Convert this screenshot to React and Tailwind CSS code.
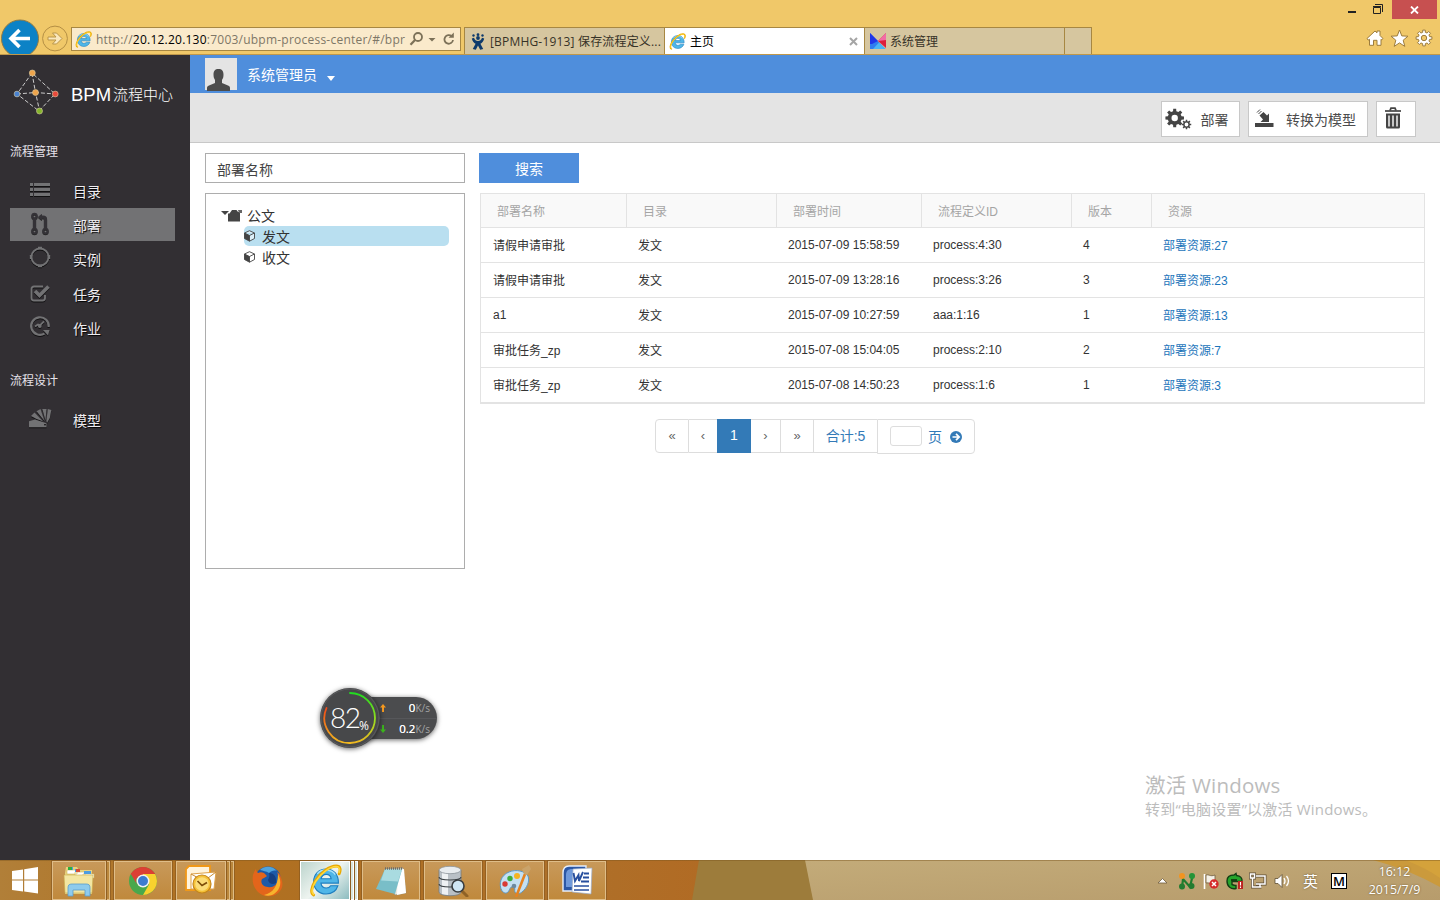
import React from "react";

const ui = "font-['Open_Sans','Noto_Sans_CJK_SC',sans-serif]";

function gearPath(cx, cy, outer, inner, teeth, hole) {
  const pts = [];
  const step = (Math.PI * 2) / teeth;
  for (let i = 0; i < teeth; i++) {
    const a = i * step - Math.PI / 2;
    [[-0.3, inner], [-0.2, outer], [0.2, outer], [0.3, inner]].forEach(([k, r]) => {
      pts.push(`${(cx + Math.cos(a + k * step) * r).toFixed(2)} ${(cy + Math.sin(a + k * step) * r).toFixed(2)}`);
    });
  }
  return `M${pts.join("L")}ZM${cx - hole} ${cy}a${hole} ${hole} 0 1 0 ${hole * 2} 0a${hole} ${hole} 0 1 0 ${-hole * 2} 0Z`;
}

function IeLogo({ className }) {
  return (
    <svg viewBox="0 0 32 32" className={className}>
      <path d="M28.5 18.5H11.6c.4 3 2.400 4.800 5.200 4.800 2 0 3.400-.8 4.200-2.200h7c-1.600 5-5.800 8-11.400 8C9.400 29.100 4.500 24 4.500 17S9.500 4.800 16.600 4.800 28.700 10 28.500 18.500ZM11.700 14.300h9.800c-.4-2.700-2.200-4.200-4.800-4.200s-4.400 1.500-5 4.200Z" fill="#4fb6e8" stroke="#1f7fc0" strokeWidth="1.100" />
      <path d="M8 9.500C10 7 13 5.600 17 5.800c4 .2 7 2 8.500 4.500" fill="none" stroke="#a8e2fa" strokeWidth="1.300" />
      <path d="M4.500 30C1.500 28.500 2 23 6 16.500 11 8.500 20 2 26.500 2c4 0 4.500 3.400 2.800 7.500" fill="none" stroke="#e9a800" strokeWidth="2.800" strokeLinecap="round" />
      <path d="M4.500 29.500C2 28 2.500 23 6.400 17 11.500 8.800 20.500 2.400 26.300 2.400c3.400 0 4 2.600 2.900 5.800" fill="none" stroke="#ffd83c" strokeWidth="1.500" strokeLinecap="round" />
    </svg>
  );
}

function WindowChrome() {
  return (
    <header className={`flex h-[55px] shrink-0 items-end overflow-hidden border-b border-[#c0984a] bg-[#f0c869] ${ui}`}>
      <svg width="71" height="36" viewBox="0 19 71 36" className="shrink-0">
        <circle cx="20" cy="39.500" r="18.500" fill="#0c82c6" stroke="#8f7a45" />
        <path d="M30 39.500H12M19.500 31 11 39.500l8.500 8.500" fill="none" stroke="#fff" strokeWidth="3.600" />
        <circle cx="55" cy="39.500" r="12.400" fill="none" stroke="#b48f44" />
        <path d="M48 38h8l-3.500-4h4l5.500 5.500-5.500 5.500h-4l3.500-4h-8Z" fill="#fae8bd" stroke="#b9964b" />
      </svg>
      <div className="mb-[3px] flex h-6 w-[390px] shrink-0 items-center border border-[#a78742] bg-[#faeacb]">
        <IeLogo className="ml-[3px] h-[17px] w-[17px] shrink-0" />
        <div className="ml-1 w-[313px] overflow-hidden whitespace-nowrap pt-px text-[12px] leading-5 tracking-[0.23px] text-[#7e7767]">
          http://<span className="text-black">20.12.20.130</span>:7003/ubpm-process-center/#/bpr
        </div>
        <svg width="48" height="18" viewBox="0 0 48 18" fill="none" stroke="#7c7158" strokeWidth="1.800" className="shrink-0">
          <circle cx="9" cy="7" r="4" />
          <path d="m6 10-4.500 4.800" strokeWidth="2.200" />
          <path d="M19.500 8h7L23 11.500Z" fill="#7c7158" stroke="none" />
          <path d="M42.700 6.300A4.300 4.300 0 1 0 44 10" />
          <path d="M44.800 2.500v5.300h-5.300Z" fill="#7c7158" stroke="none" />
        </svg>
      </div>
      <div className="ml-[3px] flex h-[27px] shrink-0 text-[12px] leading-[27px]">
        <div className="flex w-[200px] items-center border-l border-t border-[#a78742] bg-[#d6c69f] text-[#363227]">
          <svg width="14" height="17" viewBox="0 0 14 17" className="ml-[6px] shrink-0" fill="#0d3a6b">
            <circle cx="2.500" cy="2.500" r="1.200" /><circle cx="7" cy="1.700" r="1.400" /><circle cx="11.500" cy="2.500" r="1.200" />
            <circle cx="7" cy="5" r="1.900" />
            <path d="M.8 5.500 3 4.800C3.800 7.300 5 8 7 8s3.200-.7 4-3.200l2.200.7c-.5 2.700-2 4.400-3.800 5.200l2.800 5.400-3 .6L7 12.400 4.800 16.700l-3-.6 2.800-5.400C2.800 9.900 1.300 8.200.8 5.500Z" />
          </svg>
          <span className="ml-[5px] whitespace-nowrap tracking-[0.18px]">[BPMHG-1913] 保存流程定义...</span>
        </div>
        <div className="flex w-[201px] items-center border-x border-t border-[#a78742] bg-white text-black">
          <IeLogo className="ml-1 h-[17px] w-[17px] shrink-0" />
          <span className="ml-1">主页</span>
          <svg width="9" height="9" viewBox="0 0 9 9" className="ml-auto mr-[6px]"><path d="m1 1 7 7M8 1 1 8" stroke="#a5a5a5" strokeWidth="2" /></svg>
        </div>
        <div className="flex w-[200px] items-center border-r border-t border-[#a78742] bg-[#d6c69f] text-[#363227]">
          <svg width="16" height="16" viewBox="0 0 16 16" className="ml-[5px] shrink-0">
            <path d="M0 0 15.500 16H0Z" fill="#2f7df0" /><path d="M0 0 8 8 2 11H0Z" fill="#2036e8" /><path d="M3 16h12.500L9 9.500Z" fill="#4bb4f5" />
            <path d="M16 0v15L8 8Z" fill="#dc1f3c" /><path d="M16 0v7L8 8Z" fill="#f26ba5" />
          </svg>
          <span className="ml-1">系统管理</span>
        </div>
        <div className="w-[27px] border-r border-t border-[#a78742] bg-[#d6c69f]" />
      </div>
      <div className="ml-auto flex h-full flex-col items-end">
        <div className="mr-[3px] flex h-[19px]">
          <svg width="36" height="19" viewBox="0 0 36 19" fill="none" stroke="#222">
            <path d="M0 12h8" strokeWidth="2" />
            <path d="M25.500 7.500h7v6h-7ZM25 6.500h8M27 4.500h7.500V12" />
          </svg>
          <div className="ml-2 flex w-[45px] items-center justify-center bg-[#c75050]">
            <svg width="9" height="8" viewBox="0 0 9 8"><path d="m1 .5 7 7M8 .5l-7 7" stroke="#fff" strokeWidth="1.800" /></svg>
          </div>
        </div>
        <svg width="74" height="18" viewBox="1366 29 74 18" className="mt-[10px]" fill="#fff" stroke="#9c7c3d" strokeWidth="1">
          <path d="m1367 38.500 8-7.500 2 1.800V31h3v4.500l3 3-1.300 1.300-.7-.5v6h-4v-5h-3.500v5h-4v-6l-1.300.8Z" />
          <path d="m1399.500 30 2.300 5.900 6.200.3-4.800 4 1.600 6.200-5.300-3.500-5.300 3.500 1.600-6.200-4.800-4 6.200-.3Z" />
          <path fillRule="evenodd" d={gearPath(1424, 38, 8, 5.800, 8, 2.700)} />
        </svg>
      </div>
    </header>
  );
}

const navIcons = {
  list: (
    <g fill="#727274">
      <path d="M0 4h3v3H0ZM0 9h3v3H0ZM0 14h3v3H0ZM4 4h16v3H4ZM4 9h16v3H4ZM4 14h16v3H4Z" />
    </g>
  ),
  branch: (
    <g fill="none" stroke="#343237" strokeWidth="2">
      <circle cx="4.500" cy="3" r="2.200" /><circle cx="4.500" cy="18" r="2.200" /><circle cx="15.500" cy="18" r="2.200" />
      <path d="M4.500 5.500v10" strokeWidth="3.200" /><path d="M15.500 15.500V6c0-1.700-.8-2-2.500-2h-2" strokeWidth="3.200" />
      <path d="M8.500 4 11.500 1.500v5Z" fill="#343237" strokeWidth="1" />
    </g>
  ),
  ring: (
    <g fill="none" stroke="#727274" strokeWidth="1.800">
      <circle cx="10" cy="10" r="8.500" />
      <path d="M8 1h4M8 19h4M1 8v4M19 8v4" strokeWidth="2.400" />
    </g>
  ),
  check: (
    <g fill="none" stroke="#727274">
      <path d="M13 4.500H4A2.500 2.500 0 0 0 1.500 7v9A2.500 2.500 0 0 0 4 18.500h8.500A2.500 2.500 0 0 0 15 16v-3" strokeWidth="1.900" />
      <path d="m5 9 4.500 4.500 9-9" strokeWidth="3.600" />
    </g>
  ),
  job: (
    <g fill="none" stroke="#727274">
      <path d="M18.700 11a8.800 8.800 0 1 0-4.200 6.600" strokeWidth="2.200" />
      <path d="M13 14h6.500L18 19.500Z" fill="#727274" stroke="none" />
      <path d="m5 10.500 3-2 2 .8 4-4" strokeWidth="1.800" /><circle cx="9.800" cy="10" r="1.900" fill="#727274" stroke="none" />
    </g>
  ),
  swatch: (
    <g fill="#727274">
      <path fillRule="evenodd" d="M-1 13.200 5 11.500l11.500 3.700v4H-1ZM14.200 16v1.600h1.600V16Z" />
      <path d="M1 8 4.500 4.500 13 13.200 6.500 11Z" />
      <path d="m6.500 3.200 4-2.200 4 12Z" />
      <path d="M12.300 1h4.200l-1 11.500Z" />
      <path d="m17.800 1 3.500 1-1.500 8-2.800 5-.7-2Z" />
    </g>
  ),
};

function NavItem({ icon, label, h = "h-[34px]", active }) {
  return (
    <li className={h}>
      <div className={`flex h-[33px] w-[165px] ${active ? "bg-[#727274]" : ""}`}>
        <svg width="22" height="21" viewBox="0 0 22 21" className="ml-5 mt-[5px] overflow-visible drop-shadow-[0_1px_0_rgba(0,0,0,0.65)]">{navIcons[icon]}</svg>
        <span className="ml-[21px] mt-[1px] text-[14px] leading-[34px] text-[#eeecf0] [text-shadow:1px_1px_1px_#000]">{label}</span>
      </div>
    </li>
  );
}

function Sidebar() {
  return (
    <aside className="flex w-[190px] shrink-0 flex-col bg-[#322f33] pl-[10px]">
      <div className="flex h-[87px] text-white">
        <svg width="52" height="50" viewBox="10 67 52 50" className="mt-3 shrink-0">
          <path d="m32 73-15 21 22 17 16-17Zm0 0 3.500 19.500 4 18M17 94l18.500-1.500L55 94" fill="none" stroke="#ddd" strokeWidth=".9" strokeDasharray="4 2" />
          <g stroke="#d9c9a0" strokeWidth=".6">
            <circle cx="32.300" cy="73" r="3" fill="#eea44c" /><circle cx="17" cy="94" r="2.900" fill="#4a82d0" /><circle cx="35.500" cy="92.500" r="3" fill="#eea44c" />
            <circle cx="55.300" cy="94" r="2.900" fill="#e8493c" /><circle cx="39.500" cy="111" r="3" fill="#84b52c" />
          </g>
        </svg>
        <div className="ml-[9px] mt-7 flex whitespace-nowrap leading-6">
          <span className="w-[42px] font-['Liberation_Sans',sans-serif] text-[18.5px]">BPM</span>
          <span className="text-[15px] font-light">流程中心</span>
        </div>
      </div>
      <h2 className="h-8 text-[12px] leading-5 text-[#e6e2ea]">流程管理</h2>
      <ul>
        <NavItem icon="list" label="目录" />
        <NavItem icon="branch" label="部署" active />
        <NavItem icon="ring" label="实例" h="h-[35px]" />
        <NavItem icon="check" label="任务" />
        <NavItem icon="job" label="作业" />
      </ul>
      <h2 className="mt-[26px] h-8 text-[12px] leading-5 text-[#e6e2ea]">流程设计</h2>
      <ul><NavItem icon="swatch" label="模型" /></ul>
    </aside>
  );
}

function UserBar() {
  return (
    <div className="flex h-[38px] shrink-0 bg-[#4f8edc] pl-[15px] text-white">
      <svg width="32" height="33" viewBox="0 0 32 33" className="mt-[3px] shrink-0">
        <path d="M0 0h32v32H0Z" fill="#e4e4e4" />
        <path d="M13.500 11c3.500 0 5 2 5 5.500 0 2.500-.5 4-1.500 5.500v3l6 2.500c1.500.6 2 1.500 2 2.500v3H2v-3c0-1 .6-1.900 2-2.500l6-2.500v-3c-1-1.500-1.500-3-1.500-5.500 0-3.500 1.500-5.500 5-5.500Z" fill="#4c4c4c" />
      </svg>
      <span className="ml-[10px] text-[14px] leading-[41px]">系统管理员</span>
      <svg width="8" height="5" viewBox="0 0 8 5" className="ml-[10px] mt-[21px]"><path d="M0 0h8L4 5Z" fill="#fff" /></svg>
    </div>
  );
}

function Toolbar() {
  const btn = "flex h-9 border border-[#c8c8c8] bg-white text-[14px] leading-[36px] text-[#4c4c4c]";
  return (
    <div className="flex h-[50px] shrink-0 justify-end gap-2 border-b border-[#c8c8c8] bg-[#e4e4e4] pr-6 pt-2">
      <button className={`${btn} w-[79px]`}>
        <svg width="27" height="22" viewBox="0 0 27 22" className="ml-[3px] mt-[6px]" fill="#444" fillRule="evenodd">
          <path d={gearPath(9.700, 10, 9.400, 7, 8, 3.200)} /><path d={gearPath(21.500, 16.500, 4.800, 3.400, 8, 1.900)} />
        </svg>
        <span className="ml-[8.500px]">部署</span>
      </button>
      <button className={`${btn} w-[120px]`}>
        <svg width="19" height="18" viewBox="0 0 19 18" className="ml-[6px] mt-[7px]" fill="#444">
          <path d="M0 14h18.500v4H0Z" /><path d="m4.500 6.500 4-3.500 3.500 3.500L14 4.500V13H5.500l2.500-2.500Z" />
          <path d="m2 3.500 3-3M3.500 5l3-3" stroke="#444" strokeWidth="1" />
        </svg>
        <span className="ml-3">转换为模型</span>
      </button>
      <button className={`${btn} w-10`}>
        <svg width="16" height="22" viewBox="0 0 16 22" className="ml-2 mt-[5px]" fill="none" stroke="#444">
          <path d="M0 4h16" strokeWidth="1.700" /><path d="M5 3.500 6 1.200h4l1 2.300" strokeWidth="1.800" />
          <path d="M1 6.500h14V20a1.500 1.500 0 0 1-1.500 1.500h-11A1.500 1.500 0 0 1 1 20Z" fill="#444" stroke="none" />
          <path d="M4 8.500v11M8 8.500v11M12 8.500v11" stroke="#ddd" strokeWidth="1.700" />
        </svg>
      </button>
    </div>
  );
}

function Cube() {
  return (
    <svg width="11" height="12" viewBox="0 0 11 12" className="shrink-0">
      <path d="M5.500.700 10.500 3v5.500l-5 2.700-5-2.700V3ZM.5 3l5 2.500 5-2.500M5.500 5.500v5.700" fill="#fff" fillOpacity=".5" stroke="#444" strokeWidth=".9" />
      <path d="m.5 3 5 2.500v5.700l-5-2.700Z" fill="#444" />
    </svg>
  );
}

function Tree() {
  return (
    <div className="mt-[10px] h-[376px] border border-[#adadad] pl-[15px] pt-3 text-[14px] leading-[21px] text-[#333]">
      <div className="flex h-5 items-center">
        <svg width="21" height="13" viewBox="0 0 21 13" className="-mt-px">
          <path d="M0 2h8L4 6ZM7 4.500h1.500L11 1h4.500L17 3h2v9.500H7Z" fill="#444" /><path d="M17 1h4v3h-3Z" fill="#666" />
        </svg>
        <span className="ml-[5px]">公文</span>
      </div>
      <ul className="ml-[23px] w-[205px]">
        <li className="flex h-5 items-center gap-[7px] rounded-[5px] bg-[#b9dff0]"><Cube /><span className="mt-0.5">发文</span></li>
        <li className="mt-px flex h-5 items-center gap-[7px]"><Cube /><span className="mt-0.5">收文</span></li>
      </ul>
    </div>
  );
}

const rows = [
  ["请假申请审批", "发文", "2015-07-09 15:58:59", "process:4:30", "4", "部署资源:27"],
  ["请假申请审批", "发文", "2015-07-09 13:28:16", "process:3:26", "3", "部署资源:23"],
  ["a1", "发文", "2015-07-09 10:27:59", "aaa:1:16", "1", "部署资源:13"],
  ["审批任务_zp", "发文", "2015-07-08 15:04:05", "process:2:10", "2", "部署资源:7"],
  ["审批任务_zp", "发文", "2015-07-08 14:50:23", "process:1:6", "1", "部署资源:3"],
];

function DeployTable() {
  const heads = ["部署名称", "目录", "部署时间", "流程定义ID", "版本", "资源"];
  return (
    <div className="ml-px mt-[10px] w-[945px] border border-b-2 border-[#e3e3e3] text-[12px] text-[#333]">
      <div className="grid h-[33px] grid-cols-[146px_150px_145px_150px_80px_1fr] bg-[#f9f9f9] leading-[36px] text-[#a5a5a5]">
        {heads.map((h, i) => (
          <div key={h} className={`h-[33px] pl-4 ${i < 5 ? "border-r border-[#e3e3e3]" : ""}`}>{h}</div>
        ))}
      </div>
      {rows.map((r, i) => (
        <div key={i} className="grid h-[35px] grid-cols-[145px_150px_145px_150px_80px_1fr] border-t border-[#e3e3e3]">
          {r.map((c, j) => (
            <div key={j} className={`pl-3 ${/[\u4e00-\u9fff]/.test(c) ? "leading-[36px]" : "leading-[34px]"} ${j === 5 ? "text-[#1c75bb]" : ""}`}>{c}</div>
          ))}
        </div>
      ))}
    </div>
  );
}

function Pager() {
  const cell = "h-[34px] border-y border-r border-[#ddd] text-center";
  const arrow = `${cell} text-[13px] leading-[32px] text-[#666]`;
  return (
    <div className="ml-[176px] mt-[15px] flex text-[14px] text-[#337ab7]">
      <div className={`${arrow} w-[34px] rounded-l border-l`}>«</div>
      <div className={`${arrow} w-7 border-r-0`}>‹</div>
      <div className="h-[34px] w-[34px] bg-[#337ab7] text-center leading-[33px] text-white">1</div>
      <div className={`${arrow} w-[30px]`}>›</div>
      <div className={`${arrow} w-[33px]`}>»</div>
      <div className={`${cell} w-[63px] border-r-0 leading-[33px]`}>合计:5</div>
      <div className="flex h-[35px] w-[98px] items-center rounded-r border border-[#ddd]">
        <div className="mb-px ml-3 h-5 w-8 rounded-[3px] border border-[#ddd]" />
        <span className="ml-[6px] leading-8">页</span>
        <svg width="12" height="12" viewBox="0 0 12 12" className="ml-2"><circle cx="6" cy="6" r="6" fill="#337ab7" /><path d="M2.500 6h6M6 2.800 9.200 6 6 9.200" fill="none" stroke="#fff" strokeWidth="1.700" /></svg>
      </div>
    </div>
  );
}

function SpeedWidget() {
  return (
    <div className={`absolute left-[320px] top-[688px] flex h-[60px] w-[118px] items-center ${ui}`}>
      <div className="absolute left-[30px] top-[9px] flex h-[42px] w-[87px] flex-col rounded-r-full bg-[#4b4c4e] shadow-[0_1px_5px_rgba(0,0,0,0.6)]">
        {[["#f79a20", "M4 0 7 3.500H5V8H3V3.500H1Z", "0"], ["#3cb41e", "M4 8 1 4.500h2V0h2v4.500h2Z", "0.2"]].map(([c, d, v], i) => (
          <div key={v} className={`flex h-[21px] items-center pr-[7px] ${i ? "border-t border-[#56575a]" : "pt-px"}`}>
            <svg width="8" height="8" viewBox="0 0 8 8" className="ml-[29px]"><path d={d} fill={c} /></svg>
            <span className="ml-auto text-[11.5px] text-white [text-shadow:0_0_0.5px_#fff]">{v}</span>
            <span className="text-[10px] text-[#a4a4a4]">K/s</span>
          </div>
        ))}
      </div>
      <div className="relative h-[60px] w-[60px] rounded-full bg-[#47484a] shadow-[0_1px_5px_rgba(0,0,0,0.6)]">
        <svg width="60" height="60" viewBox="0 0 60 60" fill="none" strokeWidth="1.800" strokeLinecap="round">
          <defs>
            <linearGradient id="ringRight" x1="0" y1="0" x2="0" y2="1"><stop stopColor="#20dc20" /><stop offset=".55" stopColor="#9cdc20" /><stop offset="1" stopColor="#f0b820" /></linearGradient>
            <linearGradient id="ringLeft" x1="0" y1="0" x2="0" y2="1"><stop stopColor="#f04a18" /><stop offset="1" stopColor="#f0b820" /></linearGradient>
          </defs>
          <circle cx="30" cy="30" r="29" stroke="#5a5b5d" strokeWidth="1" />
          <path d="M30 5a25 25 0 0 1 0 50" stroke="url(#ringRight)" /><path d="M30 55A25 25 0 0 1 6.500 20" stroke="url(#ringLeft)" />
        </svg>
        <span className="absolute left-[10px] top-[13px] font-['Lato',sans-serif] text-[28px] font-light leading-8 tracking-[-1.6px] text-white">82</span>
        <span className="absolute left-[39px] top-[30px] text-[12px] leading-4 text-white">%</span>
      </div>
    </div>
  );
}

const appIcons = {
  folder: (
    <g>
      <path d="M2 8 3 2h11l2 3h13v24H2Z" fill="#e7d37f" /><path d="M4 5h10v4H4ZM12 7h10v4H12ZM20 9h11v4H20Z" fill="#fff" stroke="#d0b85c" strokeWidth=".6" />
      <path d="M5 2h5v3H5ZM12 4h5v3h-5ZM21 6h7v3h-7Z" fill="#4c9de0" /><path d="M5 2h4v3H5Z" fill="#2fae3c" /><path d="M13 4h4v3h-4Z" fill="#d84c34" />
      <path d="M1 10h29l-1 18H2Z" fill="#f3e6a2" stroke="#c9ad4c" strokeWidth=".6" />
      <path d="M5 31V23c0-3 1-4 4-4h14c3 0 4 1 4 4v8h-5v-6H10v6Z" fill="#8ecbed" stroke="#5a9cc9" strokeWidth=".8" />
    </g>
  ),
  chrome: (
    <g>
      <circle cx="16" cy="16" r="14" fill="#49a84c" /><path d="M16 16 3.900 9a14 14 0 0 1 24.200 0Z" fill="#d93b31" /><path d="M16 16V9h12.100A14 14 0 0 1 16 30l6-10.500Z" fill="#f8d22e" />
      <path d="M16 9h12A14 14 0 0 0 3.900 9L10 19.500A7 7 0 0 1 16 9Z" fill="#dc4034" />
      <circle cx="16" cy="16" r="6.500" fill="#f2f2f2" /><circle cx="16" cy="16" r="5" fill="#3c7bd0" />
    </g>
  ),
  outlook: (
    <g>
      <path d="M4 1h21v24H1V4Z" fill="#fff3dc" stroke="#f09818" strokeWidth="1.800" /><path d="M6 9l25-2-2 17H6Z" fill="#fff" stroke="#dda14a" />
      <path d="m6 9 13 7L31 7" fill="none" stroke="#c98a2c" /><circle cx="17" cy="19" r="9" fill="#f5c138" stroke="#c5861a" strokeWidth="1.200" />
      <circle cx="17" cy="19" r="6.800" fill="#fbdc78" /><path d="m12.500 16 4.500 4.500 5-3" fill="none" stroke="#7c4c08" strokeWidth="1.700" />
    </g>
  ),
  firefox: (
    <g>
      <circle cx="17" cy="14.500" r="13" fill="#1d5aa8" />
      <path d="M9 5c5-5 13-4 17 1-3-1-6 0-8 2-3-2-6-2-9-3Z" fill="#4fa3dc" />
      <path d="M18 8c5 0 8 4 7 10-3 2-7 1-8-3 1-2 2-4 1-7Z" fill="#163f82" />
      <path d="M2 10c1-3 2-5 3-6 0 2 1 3 2 4 2-1 4-1 6 0l3 3c-1 1-3 2-5 3-2 4 1 8 6 8 5 1 9-2 10-7 1-3 0-6-1-8 3 2 4 4 4 6 3 7 1 12-3 15-6 5-15 4-20-1-5-5-6-11-5-17Z" fill="#e3651b" />
      <path d="M27 9c4 8 3 15-4 20-3 2-7 2-10 1 9-2 14-9 14-21Z" fill="#f7b32c" />
    </g>
  ),
  note: (
    <g>
      <path d="m10 4 18-1 3 25-11 2Z" fill="#e9e9df" stroke="#8d8d83" strokeWidth=".6" /><path d="m23 5 6-1 2 24-9 2Z" fill="#fff" /><path d="m10 4 17 .5-7 24.500-19-5Z" fill="#79bec8" />
      <path d="m10 4 17 .5-4 12-17-1Z" fill="#a9dbe0" /><path d="M10 3.500h18" stroke="#6d6d68" strokeWidth="2.500" strokeDasharray="1 1" />
    </g>
  ),
  db: (
    <g>
      <path d="M2 5v22c0 5 22 5 22 0V5Z" fill="#b9c0c6" stroke="#747b80" strokeWidth=".8" /><path d="M5 7v22l6 1V8Z" fill="#eef1f3" /><path d="M2 12c0 4 22 4 22 0M2 19c0 4 22 4 22 0" fill="none" stroke="#3c4246" strokeWidth="1.100" />
      <ellipse cx="13" cy="5" rx="11" ry="3.700" fill="#e8ecef" stroke="#8d949a" strokeWidth=".8" />
      <path d="m24 25 6 6" stroke="#8f6226" strokeWidth="3" strokeLinecap="round" /><circle cx="21" cy="21" r="6" fill="#cfe6f4" stroke="#393d40" strokeWidth="1.600" />
    </g>
  ),
  paint: (
    <g>
      <path d="M3 26C-1 19 2 10 10 7c7-3 16-1 19 4 2 5-1 12-6 16-2 2-6 2-7 0s1-4-2-5-3 3-5 5-4 1-6-1Z" fill="#c4e0f2" stroke="#5d97c2" strokeWidth="1" />
      <circle cx="6" cy="19" r="2.700" fill="#d93a34" /><circle cx="11" cy="13.500" r="2.700" fill="#3eac3c" /><circle cx="18" cy="11" r="3" fill="#f4b321" /><circle cx="15" cy="21" r="2.300" fill="#6d8aa0" />
      <path d="M17 32 26 9" stroke="#e58220" strokeWidth="2.600" /><path d="m25 9-2-5 7-4 2 4-4 6Z" fill="#caa36a" />
    </g>
  ),
  word: (
    <g>
      <path d="M8 1h17v25H2V8C2 4 4 1 8 1Z" fill="#2c57a5" stroke="#e6eefb" strokeWidth="1.400" /><path d="M5 10C5 6 7 4 11 4h5l-5 18H5Z" fill="#6e98da" />
      <path d="m12 4 19-1-1 26-19-2Z" fill="#fff" stroke="#9aabc9" strokeWidth=".7" />
      <path d="m12.500 8 1.500 8 3.500-6 .5 6 4-9M23 8.500h5M22 12.500h6M20 16.500h8" fill="none" stroke="#284f9e" strokeWidth="1.900" />
      <path d="M13 21h15M13 25h15" stroke="#284f9e" strokeWidth="1.700" />
    </g>
  ),
};

function TaskButton({ name, stack = 0, plain, active }) {
  const face = plain
    ? "border-transparent"
    : active
      ? "border-white bg-[linear-gradient(135deg,#bcd4cd,#eef4f0_50%,#8cbcc0)]"
      : "border-[#dfbd88] bg-[linear-gradient(#c8995a,#c0893c)]";
  const edge = active ? "border-white bg-[#d8e6e0]" : "border-[#dfbd86] bg-[#bb883d]";
  return (
    <div className={`mr-1 flex h-[39px] w-[58px] gap-px ${plain ? "" : "bg-[#825520]/70 outline outline-1 outline-[#825520]/60"}`}>
      <div className={`flex flex-1 items-center justify-center border ${face}`}>
        {name === "ie" ? <IeLogo className="h-[33px] w-[33px]" /> : <svg width="32" height="32" viewBox="0 0 32 32">{appIcons[name]}</svg>}
      </div>
      {Array.from({ length: stack }, (_, i) => <div key={i} className={`w-[3px] border-y border-r ${edge}`} />)}
    </div>
  );
}

function Tray() {
  return (
    <div className="ml-auto flex h-full items-center text-white">
      <svg width="194" height="24" viewBox="1156 869 194 24" className="mt-px">
        <path d="m1158 883 4.500-4.500 4.500 4.500Z" fill="#fff" stroke="#6e5c3c" strokeWidth=".8" />
        <path d="m1182 888 1-9 7 8 3-13" fill="none" stroke="#207c2e" strokeWidth="2.200" />
        <circle cx="1182" cy="876" r="3" fill="#f29420" /><circle cx="1192" cy="876" r="3" fill="#259438" /><circle cx="1182" cy="886.500" r="3" fill="#237c30" /><circle cx="1191.500" cy="886" r="3" fill="#237c30" />
        <path d="M1204.500 874v15" stroke="#fff" strokeWidth="1.600" /><path d="M1206 875c3-1 4 2 9 0v8c-4 2-6-1-9 0Z" fill="#f4f0e6" stroke="#6e5c3c" strokeWidth=".8" />
        <circle cx="1214" cy="884" r="4.700" fill="#d52b2b" /><path d="m1212 882 4 4m0-4-4 4" stroke="#fff" strokeWidth="1.500" />
        <path d="M1227 881c0-4 3-6 7-6l2-1.500.5 2c4 .5 6 2.500 5.500 6h-10v3c2 1 3 1 4 1v3c-5 1-9-2-9-7.500Z" fill="#25a52b" stroke="#143f14" strokeWidth="1.400" />
        <path d="M1231 880h6" stroke="#0f2d0f" strokeWidth="1.600" />
        <path d="M1238 881h5v8h-5Z" fill="#bc2320" /><path d="M1240.500 882v3.500M1240.500 886.500v1.500" stroke="#fff" strokeWidth="1.100" />
        <g fill="none" stroke="#5e4e34" strokeWidth="3"><path d="M1256 876h9v8h-9M1250.500 874h4v4h-4ZM1252.500 878v9h9" /></g>
        <g fill="none" stroke="#fff" strokeWidth="1.500"><path d="M1256 876h9v8h-9M1250.500 874h4v4h-4ZM1252.500 878v9h9M1260 884v3" /></g>
        <path d="M1275 878.500h3l4-4v13l-4-4h-3Z" fill="#fff" stroke="#5e4e34" strokeWidth=".8" /><path d="M1284 878q2 3 0 6M1286.500 876q4 5 0 10" fill="none" stroke="#fff" strokeWidth="1.300" />
      </svg>
      <span className="-ml-[47px] text-[15px] leading-5 [text-shadow:0_0_2px_#5e4e34]">英</span>
      <span className="ml-[13px] h-4 w-4 border border-black bg-white text-center text-[13px] font-semibold leading-[14px] text-black">M</span>
      <div className="ml-[18px] mr-4 w-[59px] whitespace-nowrap text-center text-[12.4px] leading-[18px] [text-shadow:0_0_2px_#6b532b]">
        <div>16:12</div><div>2015/7/9</div>
      </div>
    </div>
  );
}

function Taskbar() {
  return (
    <footer className={`relative h-10 shrink-0 overflow-hidden ${ui}`}>
      <svg width="1440" height="40" viewBox="0 0 1440 40" className="absolute inset-0">
        <defs>
          <linearGradient id="wallLeft"><stop stopColor="#b17f38" /><stop offset=".3" stopColor="#b07020" /><stop offset=".8" stopColor="#ae7029" /><stop offset="1" stopColor="#b16b24" /></linearGradient>
          <linearGradient id="wallRight" x2="1" y2="1"><stop stopColor="#c3ab79" /><stop offset="1" stopColor="#b79c6c" /></linearGradient>
        </defs>
        <path d="M0 0h700v40H0Z" fill="url(#wallLeft)" /><path d="M699 0h120v40H692Z" fill="#9d7c3b" />
        <path d="M805 0h635v40H813Z" fill="url(#wallRight)" />
        <path d="M1373 0h67v27q-30-17-67-27Z" fill="#cb9a3c" /><path d="M1405 0h35v18q-14-10-35-18Z" fill="#d4a23b" />
        <path d="M0 .5h1440" stroke="#7c5620" strokeOpacity=".45" />
      </svg>
      <div className="relative flex h-full pt-px">
        <svg width="52" height="39" viewBox="0 0 52 39" className="shrink-0"><path d="m12 10 11-1.600V18.500H12ZM24.200 8.200 38 6v12.500H24.200ZM12 19.500h11V30.500l-11-1.600ZM24.200 19.500H38V32.500l-13.800-1.900Z" fill="#fff" /></svg>
        <TaskButton name="folder" stack={1} />
        <TaskButton name="chrome" />
        <TaskButton name="outlook" stack={2} />
        <TaskButton name="firefox" plain />
        <TaskButton name="ie" stack={2} active />
        <TaskButton name="note" />
        <TaskButton name="db" />
        <TaskButton name="paint" />
        <TaskButton name="word" />
        <Tray />
      </div>
    </footer>
  );
}

export default function App() {
  return (
    <div className="relative flex h-[900px] w-[1440px] flex-col overflow-hidden bg-white font-['Liberation_Sans','Noto_Sans_CJK_SC',sans-serif]">
      <WindowChrome />
      <div className="flex min-h-0 flex-1">
        <Sidebar />
        <main className="flex flex-1 flex-col">
          <UserBar />
          <Toolbar />
          <div className="flex pl-[15px] pt-[10px]">
            <section className="w-[260px]">
              <div className="h-[30px] border border-[#adadad] pl-[11px] text-[14px] leading-[32px] text-[#444]">部署名称</div>
              <Tree />
            </section>
            <section className="ml-[14px]">
              <button className="block h-[30px] w-[100px] bg-[#4f8edc] pt-px text-[14px] leading-[30px] text-white">搜索</button>
              <DeployTable />
              <Pager />
            </section>
          </div>
        </main>
      </div>
      <Taskbar />
      <SpeedWidget />
      <div className={`absolute left-[1145px] top-[771px] whitespace-nowrap text-[#bcbcbc] ${ui}`}>
        <div className="text-[20.5px] leading-7 tracking-[0.2px]">激活 Windows</div>
        <div className="text-[15px] leading-5 tracking-[0.2px]">转到“电脑设置”以激活 Windows。</div>
      </div>
    </div>
  );
}
